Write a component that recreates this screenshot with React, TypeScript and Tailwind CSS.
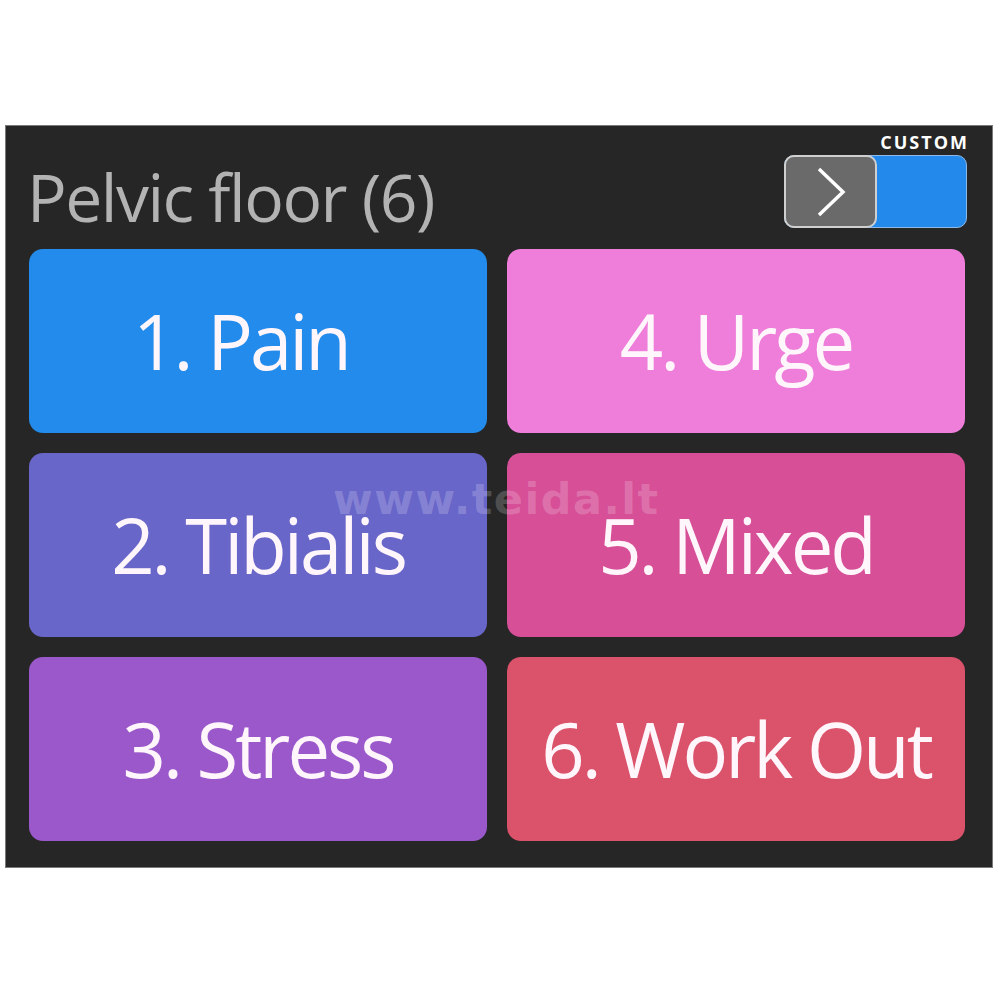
const tiles = [
  { label: '1. Pain', bg: 'bg-[#228beb]', extra: 'pr-[34px]' },
  { label: '4. Urge', bg: 'bg-[#ee7eda]', extra: '' },
  { label: '2. Tibialis', bg: 'bg-[#6966c9]', extra: '' },
  { label: '5. Mixed', bg: 'bg-[#d64f97]', extra: '' },
  { label: '3. Stress', bg: 'bg-[#9b58cb]', extra: '' },
  { label: '6. Work Out', bg: 'bg-[#db526b]', extra: '' },
];

function CustomToggle() {
  return (
    <div className="flex flex-col items-end mr-[-2px]">
      <span className="mt-[7px] text-[18px] leading-none font-bold text-white tracking-[2px] mr-[-2px]">CUSTOM</span>
      <div className="mt-[4px] flex w-[183px] h-[73px] rounded-[10px] bg-[#2389ea] border border-[#8fb9e6]">
        <div className="flex items-center justify-center w-[93px] h-[73px] rounded-[10px] bg-[#6a6a6a] border-2 border-[#cfcfcf] -m-px">
          <svg width="30" height="50" viewBox="0 0 30 50" fill="none">
            <polyline points="3,2 27,25 3,48" stroke="white" strokeWidth="3.5" strokeLinejoin="miter" />
          </svg>
        </div>
      </div>
    </div>
  );
}

export default function App() {
  return (
    <div className="w-[1000px] h-[1000px] bg-white pt-[125px] pl-[5px] font-['Open_Sans','Noto_Sans',sans-serif]">
      <div className="relative w-[988px] h-[743px] bg-[#262626] border border-[#7a7a7a] pl-[23px] pr-[27px]">
        <div className="flex justify-between items-start h-[123px]">
          <h1 className="mt-[37px] -ml-[2px] text-[66px] leading-[66px] tracking-[-1.5px] text-[#b3b3b3] font-normal">Pelvic floor (6)</h1>
          <CustomToggle />
        </div>
        <div className="grid grid-cols-2 gap-[20px] auto-rows-[184px]">
          {tiles.map((t) => (
            <button
              key={t.label}
              className={`${t.bg} ${t.extra} rounded-[14px] flex items-center justify-center text-[76px] leading-none tracking-[-3px] text-[#fff6fc]`}
            >
              {t.label}
            </button>
          ))}
        </div>
        <div className="absolute left-[327px] top-[352px] text-[43px] leading-none tracking-[1.5px] font-bold font-['DejaVu_Sans',sans-serif] text-white/20 pointer-events-none">
          www.teida.lt
        </div>
      </div>
    </div>
  );
}
